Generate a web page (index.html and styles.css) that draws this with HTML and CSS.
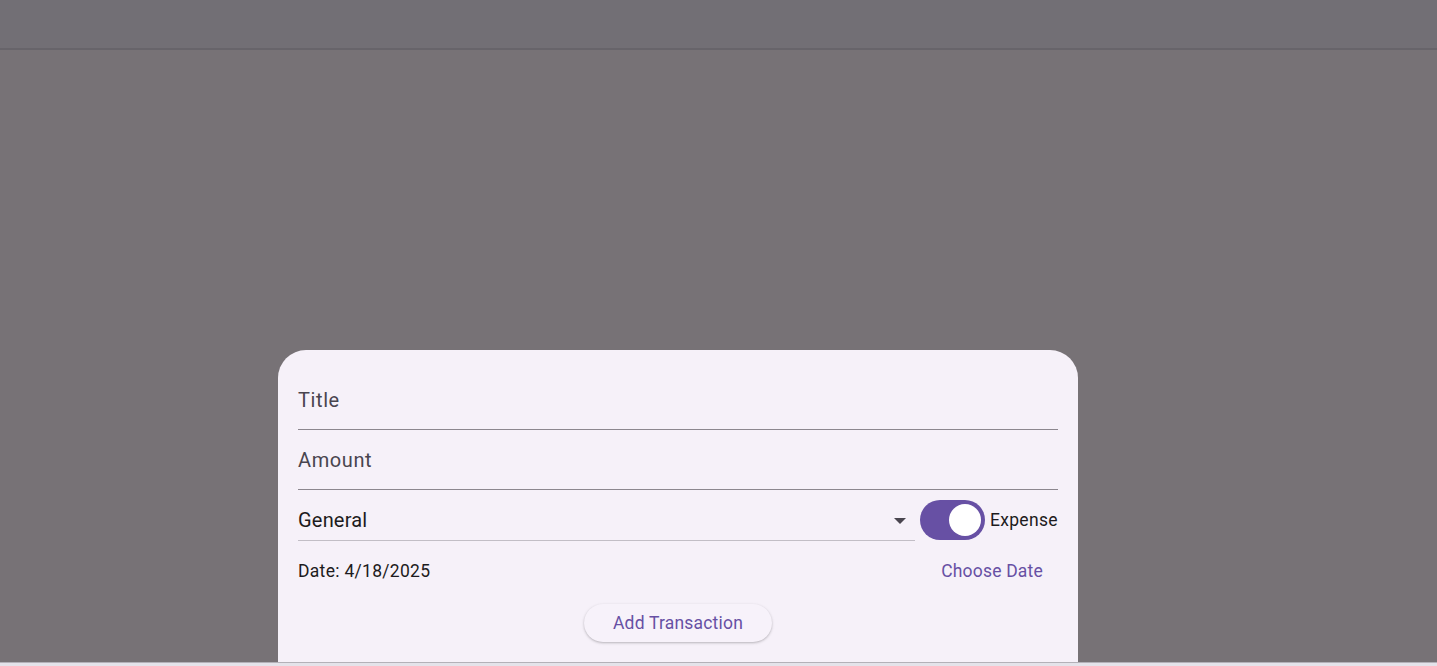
FILE: index.html
```html
<!DOCTYPE html>
<html>
<head>
<meta charset="utf-8">
<link rel="stylesheet" href="styles.css">
</head>
<body>
<div class="page">
  <header class="appbar"></header>
  <main class="scrim">
    <section class="sheet">
      <div class="field"><span class="label">Title</span></div>
      <div class="field"><span class="label">Amount</span></div>
      <div class="row">
        <div class="dropdown">
          <span class="value">General</span>
          <svg class="arrow" width="12" height="6" viewBox="0 0 12 6"><path d="M0 0 L12 0 L6 6 Z" fill="#49454f"/></svg>
        </div>
        <div class="switch"><div class="thumb"></div></div>
        <span class="switch-label">Expense</span>
      </div>
      <div class="date-row">
        <span class="date">Date: 4/18/2025</span>
        <button class="text-btn">Choose Date</button>
      </div>
      <div class="actions">
        <button class="elev-btn">Add Transaction</button>
      </div>
    </section>
  </main>
  <footer class="taskbar"></footer>
</div>
</body>
</html>
```
FILE: styles.css
```css
* { box-sizing: border-box; }
html, body { margin: 0; padding: 0; }
body {
  font-family: Roboto, "Liberation Sans", sans-serif;
  background: #777276;
  overflow: hidden;
}
.page {
  display: flex;
  flex-direction: column;
  height: 666px;
}
.appbar {
  height: 50px;
  flex: none;
  background: #726f75;
  border-bottom: 2px solid #67646a;
}
.scrim {
  flex: 1;
  background: #777276;
  display: flex;
  justify-content: center;
  align-items: flex-end;
  overflow: hidden;
  padding-right: 81px;
}
.sheet {
  width: 800px;
  height: 312px;
  flex: none;
  background: #f6f1f9;
  border-radius: 28px 28px 0 0;
  padding: 20px 20px 0;
  display: flex;
  flex-direction: column;
}
.field {
  height: 60px;
  border-bottom: 1px solid #8c878f;
  display: flex;
  align-items: center;
  padding-top: 1px;
}
.label {
  font-size: 20px;
  letter-spacing: 0.6px;
  color: #49454f;
}
.row {
  height: 51px;
  display: flex;
  align-items: flex-start;
}
.dropdown {
  width: 617px;
  height: 51px;
  border-bottom: 1px solid #c2bec6;
  display: flex;
  align-items: center;
  justify-content: space-between;
  padding-right: 9px;
  padding-top: 9px;
}
.value {
  font-size: 20px;
  letter-spacing: 0.2px;
  color: #1d1b20;
}
.arrow { display: block; margin-top: 2px; }
.switch {
  margin-left: 5px;
  margin-top: 10px;
  width: 65px;
  height: 40px;
  border-radius: 20px;
  background: #6750a4;
  display: flex;
  align-items: center;
  justify-content: flex-end;
  padding-right: 4px;
}
.thumb {
  width: 32px;
  height: 32px;
  border-radius: 50%;
  background: #ffffff;
}
.switch-label {
  margin-left: 5px;
  margin-top: 20px;
  font-size: 17.5px;
  line-height: 21px;
  letter-spacing: 0.3px;
  color: #1d1b20;
}
.date-row {
  margin-top: 5px;
  height: 50px;
  display: flex;
  align-items: center;
  justify-content: space-between;
}
.date {
  font-size: 17.5px;
  letter-spacing: 0.3px;
  color: #1d1b20;
}
.text-btn {
  font-family: inherit;
  height: 50px;
  padding: 0 15px;
  border: none;
  background: transparent;
  border-radius: 25px;
  color: #6750a4;
  font-size: 17.5px;
  font-weight: 400;
  letter-spacing: 0.2px;
}
.actions {
  margin-top: 8px;
  display: flex;
  justify-content: center;
}
.elev-btn {
  font-family: inherit;
  width: 188px;
  height: 38px;
  border: none;
  border-radius: 19px;
  background: #f7f2fa;
  color: #6750a4;
  font-size: 17.5px;
  font-weight: 400;
  letter-spacing: 0.2px;
  box-shadow: 0 1px 2px rgba(0,0,0,0.18), 0 1px 3px 1px rgba(0,0,0,0.06);
}
.taskbar {
  height: 4px;
  flex: none;
  background: #e4e3ea;
  border-top: 1px solid #b3b1b8;
}
```
